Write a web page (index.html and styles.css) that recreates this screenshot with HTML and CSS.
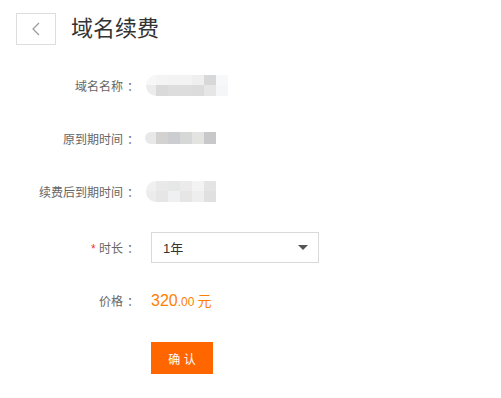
FILE: index.html
```html
<!DOCTYPE html>
<html lang="zh-CN">
<head>
    <meta charset="UTF-8">
    <title>域名续费</title>
    <link rel="stylesheet" href="styles.css">
</head>
<body>
    <div class="header">
        <a class="back-btn" href="#">
            <svg width="10" height="14" viewBox="0 0 10 14"><polyline points="8,1 2,7 8,13" fill="none" stroke="#999" stroke-width="1.2"/></svg>
        </a>
        <h1>域名续费</h1>
    </div>

    <div class="form">
        <div class="row">
            <div class="label">域名名称<span class="colon">：</span></div>
            <div class="value">
                <div class="mosaic tall">
                    <div class="mrow">
                        <span class="c first" style="background:#f7f7f7"></span><span class="c" style="background:#f4f4f4"></span><span class="c" style="background:#f3f3f3"></span><span class="c" style="background:#f3f3f3"></span><span class="c" style="background:#efefef"></span><span class="c" style="background:#d8d8d8"></span><span class="c" style="background:#f7f8fa"></span>
                    </div>
                    <div class="mrow">
                        <span class="c first" style="background:#ececec"></span><span class="c" style="background:#dadada"></span><span class="c" style="background:#dddddd"></span><span class="c" style="background:#dddddd"></span><span class="c" style="background:#dcdcdc"></span><span class="c" style="background:#e6e6e6"></span><span class="c" style="background:#f5f6f8"></span>
                    </div>
                </div>
            </div>
        </div>

        <div class="row">
            <div class="label">原到期时间<span class="colon">：</span></div>
            <div class="value">
                <div class="mosaic short">
                    <div class="mrow">
                        <span class="c first" style="background:#e8e8e8"></span><span class="c" style="background:#d4d2d0"></span><span class="c" style="background:#cbcdd0"></span><span class="c" style="background:#d6d8d8"></span><span class="c" style="background:#e3e3e1"></span><span class="c" style="background:#c8c8ca"></span>
                    </div>
                </div>
            </div>
        </div>

        <div class="row">
            <div class="label">续费后到期时间<span class="colon">：</span></div>
            <div class="value">
                <div class="mosaic tall">
                    <div class="mrow">
                        <span class="c first" style="background:#f0f0f0"></span><span class="c" style="background:#e9e9e9"></span><span class="c" style="background:#e6e8e8"></span><span class="c" style="background:#ebebeb"></span><span class="c" style="background:#f3f3f3"></span><span class="c" style="background:#e4e4e4"></span>
                    </div>
                    <div class="mrow">
                        <span class="c first" style="background:#ececec"></span><span class="c" style="background:#e6e6e6"></span><span class="c" style="background:#eff0f2"></span><span class="c" style="background:#e6e6e6"></span><span class="c" style="background:#eeeeee"></span><span class="c" style="background:#e0e0e0"></span>
                    </div>
                </div>
            </div>
        </div>

        <div class="row row-select">
            <div class="label"><span class="required">*</span> 时长<span class="colon">：</span></div>
            <div class="value">
                <div class="select">
                    <span>1年</span>
                    <span class="caret"></span>
                </div>
            </div>
        </div>

        <div class="row">
            <div class="label">价格<span class="colon">：</span></div>
            <div class="value price">
                <span class="int">320</span><span class="dec">.00</span><span class="unit">元</span>
            </div>
        </div>

        <div class="row row-btn">
            <div class="label"></div>
            <div class="value">
                <button class="confirm">确 认</button>
            </div>
        </div>
    </div>
</body>
</html>
```

FILE: styles.css
```css
body {
    margin: 0;
    font-family: "Liberation Sans", "Noto Sans CJK SC", sans-serif;
    background: #fff;
    color: #333;
}

.header {
    display: flex;
    align-items: center;
    padding: 13px 16px 0;
    height: 32px;
}

.back-btn {
    box-sizing: border-box;
    width: 40px;
    height: 32px;
    border: 1px solid #ddd;
    display: flex;
    align-items: center;
    justify-content: center;
}

.header h1 {
    margin: 0 0 0 15px;
    font-size: 22px;
    font-weight: normal;
    color: #333;
    line-height: 32px;
}

.form {
    display: flex;
    flex-direction: column;
    padding-top: 24px;
}

.row {
    display: flex;
    align-items: center;
    height: 32px;
    margin-bottom: 21px;
}

.row-select {
    margin-top: 3px;
}

.row-btn {
    margin-top: 5px;
}

.label {
    width: 135px;
    text-align: right;
    font-size: 12px;
    color: #666;
    flex-shrink: 0;
}

/* full-width colon sits left in its cell, nudge it to the middle */
.colon {
    padding-left: 4px;
    margin-right: -4px;
}

.required {
    color: #e4393c;
}

.value {
    margin-left: 16px;
    display: flex;
    align-items: center;
}

.mosaic {
    margin-left: -5px;
}

.mosaic.short {
    margin-left: -6px;
}

.mrow {
    display: flex;
}

.tall .mrow {
    height: 10px;
}

.tall .mrow:last-child {
    height: 11px;
}

.short .mrow {
    height: 12px;
}

.c {
    display: block;
    width: 12px;
}

.c.first {
    width: 11px;
}

.tall .c.first {
    width: 10px;
}

.tall .mrow:first-child .c.first {
    border-top-left-radius: 10px;
}

.tall .mrow:last-child .c.first {
    border-bottom-left-radius: 10px;
}

.short .c.first {
    border-radius: 6px 0 0 6px;
}

.select {
    box-sizing: border-box;
    width: 168px;
    height: 31px;
    border: 1px solid #d9d9d9;
    display: flex;
    align-items: center;
    justify-content: space-between;
    padding: 0 10px 0 11px;
    font-size: 13px;
    color: #333;
}

.caret {
    width: 0;
    height: 0;
    border-left: 5px solid transparent;
    border-right: 5px solid transparent;
    border-top: 5px solid #555;
}

.price {
    color: #ff8000;
    align-items: baseline;
}

.price .int {
    font-size: 16px;
}

.price .dec {
    font-size: 12px;
}

.price .unit {
    font-size: 14px;
    margin-left: 3px;
}

.confirm {
    width: 62px;
    height: 32px;
    border: none;
    background: #ff6600;
    color: #fff;
    font-family: inherit;
    font-size: 12px;
    cursor: pointer;
}
```
